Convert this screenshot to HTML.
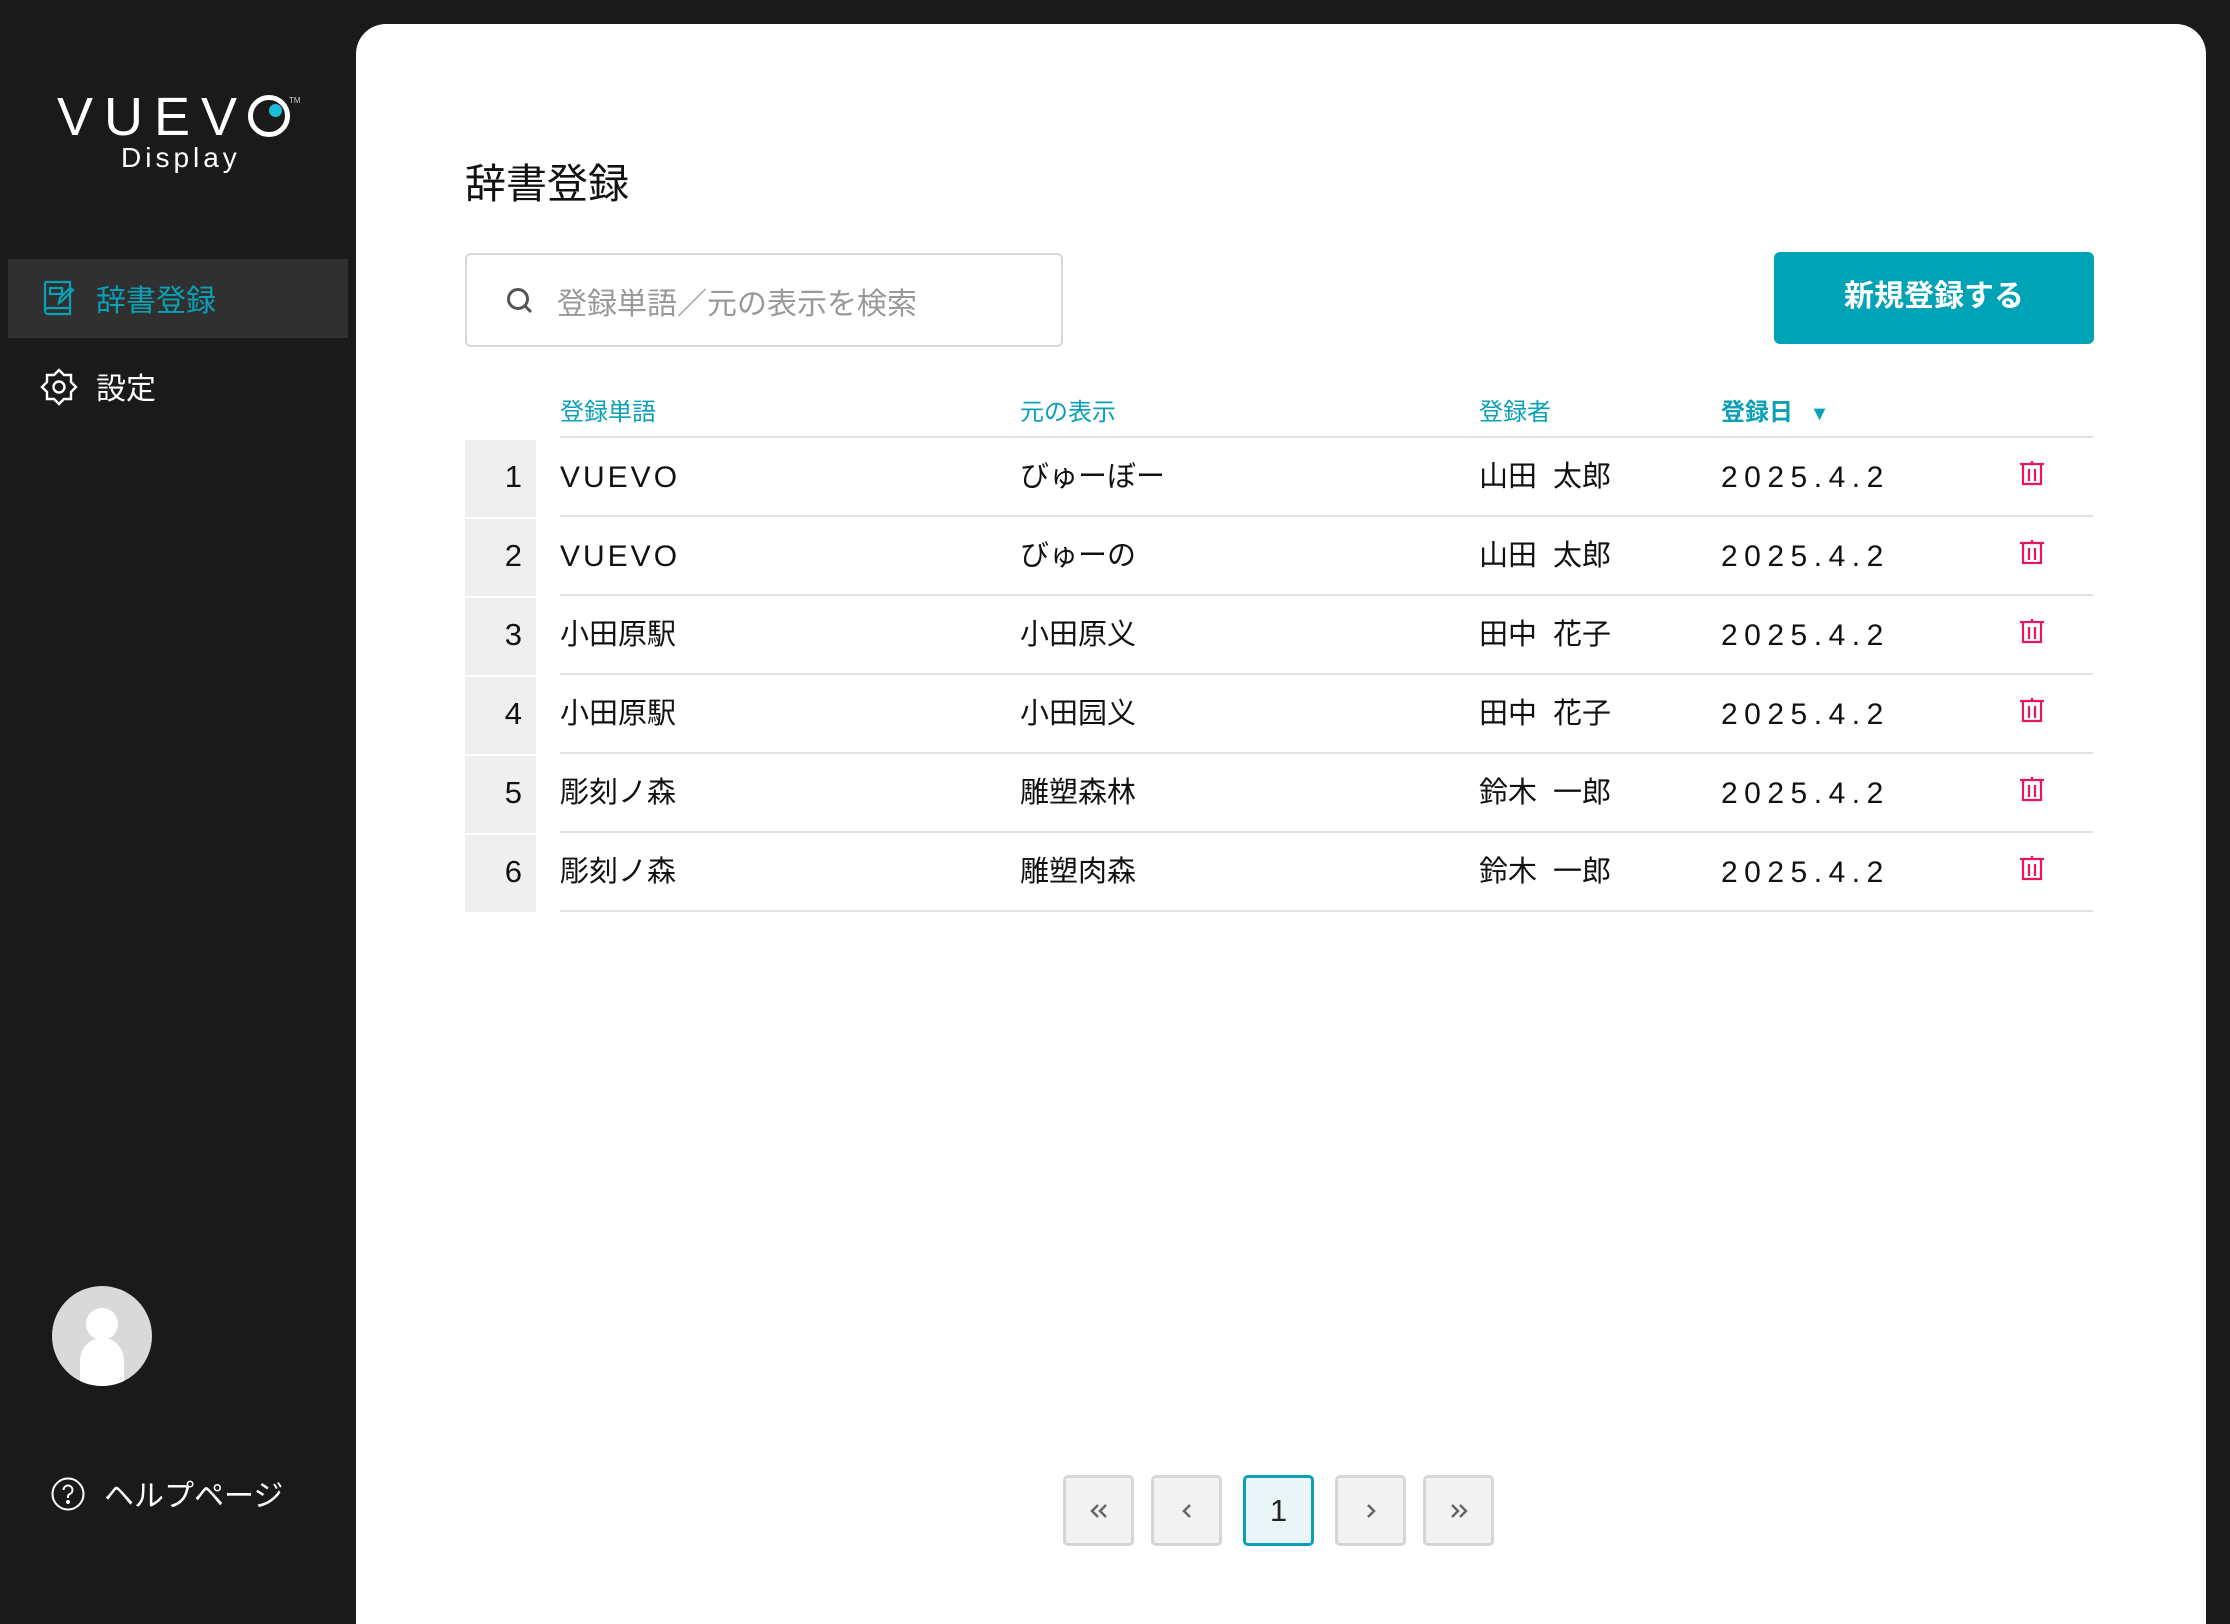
<!DOCTYPE html>
<html><head><meta charset="utf-8"><style>
*{margin:0;padding:0;box-sizing:border-box}
body{width:2230px;height:1594px;background:#1a1a1a;position:relative;overflow:hidden;font-family:"Liberation Sans","Noto Sans CJK JP",sans-serif;color:#111}
.a{position:absolute;white-space:nowrap}
#main{position:absolute;left:356px;top:24px;width:1850px;height:1600px;background:#fff;border-radius:30px 30px 0 0}
.hd{color:#0aa0b6;font-size:24px;top:392px}
.row{position:absolute;left:465px;width:1628px;height:79px}
.num{position:absolute;left:0;top:2px;width:71px;height:77px;background:#efefef;font-size:31px;text-align:right;padding-right:14px;line-height:74px}
.line{position:absolute;left:95px;right:0;bottom:0;height:2px;background:#e2e2e2}
.c{position:absolute;top:0;line-height:79px;font-size:29px}
.d{left:1256px;letter-spacing:6.5px;font-size:30px}
.n{word-spacing:8px}
.pg{position:absolute;top:1475px;width:71px;height:71px;border:3px solid #d6d6d6;border-radius:5px;background:#f2f2f2;display:flex;align-items:center;justify-content:center}
</style></head><body>
<!-- logo -->
<div class="a" style="left:57px;top:86px;font-size:54px;color:#fff;letter-spacing:11px;font-weight:300">VUEV<span style="display:inline-block;width:42px;height:42px;border:5px solid #fff;border-radius:50%;position:relative;vertical-align:-2px"><span style="position:absolute;right:3px;top:4px;width:13px;height:13px;border-radius:50%;background:#1bbfd6"></span></span></div>
<div class="a" style="left:289px;top:96px;font-size:8px;color:#ccc">TM</div>
<div class="a" style="left:121px;top:142px;font-size:28px;color:#fff;letter-spacing:4px">Display</div>
<!-- menu -->
<div class="a" style="left:8px;top:259px;width:340px;height:79px;background:#303030"></div>
<svg class="a" style="left:42px;top:280px" width="34" height="38" viewBox="0 0 34 38" fill="none" stroke="#0aa0b6" stroke-width="2.2"><path d="M4 2h24v32H6a3 3 0 0 1-3-3V3z"/><path d="M3 31a3 3 0 0 1 3-3h22"/><rect x="8" y="8" width="12" height="6"/><path d="M31 10l-10 10-4 3 1-5 10-10z"/></svg>
<div class="a" style="left:96px;top:276px;font-size:30px;color:#0aa0b6">辞書登録</div>
<svg class="a" style="left:40px;top:368px" width="38" height="38" viewBox="0 0 38 38" fill="none" stroke="#fff" stroke-width="2.4"><path d="M19 2l5 5 7 0 0 7 5 5-5 5 0 7-7 0-5 5-5-5-7 0 0-7-5-5 5-5 0-7 7 0z"/><circle cx="19" cy="19" r="5.5"/></svg>
<div class="a" style="left:96px;top:364px;font-size:30px;color:#fff">設定</div>
<!-- avatar -->
<div class="a" style="left:52px;top:1286px;width:100px;height:100px;border-radius:50%;background:#d9d9d9;overflow:hidden">
<div style="position:absolute;left:34px;top:22px;width:32px;height:32px;border-radius:50%;background:#fff"></div>
<div style="position:absolute;left:28px;top:52px;width:44px;height:60px;border-radius:22px 22px 0 0;background:#fff"></div></div>
<svg class="a" style="left:51px;top:1477px" width="34" height="34" viewBox="0 0 34 34" fill="none" stroke="#fff" stroke-width="2"><circle cx="17" cy="17" r="15.5"/><path d="M12.5 13a4.5 4.5 0 1 1 6 4.2c-1 .5-1.5 1.3-1.5 2.5v1.3"/><circle cx="17" cy="25" r="1" fill="#fff"/></svg>
<div class="a" style="left:104px;top:1471px;font-size:30px;color:#fff">ヘルプページ</div>

<div id="main"></div>
<div class="a" style="left:465px;top:150px;font-size:41px">辞書登録</div>
<div class="a" style="left:465px;top:253px;width:598px;height:94px;border:2px solid #d8d8d8;border-radius:6px"></div>
<svg class="a" style="left:505px;top:286px" width="30" height="30" viewBox="0 0 30 30" fill="none" stroke="#555" stroke-width="3"><circle cx="13" cy="13" r="9.5"/><path d="M20 20l6 6"/></svg>
<div class="a" style="left:557px;top:279px;font-size:30px;color:#999">登録単語／元の表示を検索</div>
<div class="a" style="left:1774px;top:252px;width:320px;height:92px;background:#00a2b5;border-radius:6px;color:#fff;font-weight:bold;font-size:30px;line-height:90px;text-align:center">新規登録する</div>

<div class="a hd" style="left:560px">登録単語</div>
<div class="a hd" style="left:1020px">元の表示</div>
<div class="a hd" style="left:1479px">登録者</div>
<div class="a hd" style="left:1721px;font-weight:bold">登録日 <span style="font-size:20px;margin-left:10px">▼</span></div>
<div class="a" style="left:560px;top:436px;width:1533px;height:2px;background:#e2e2e2"></div>

<div class="row" style="top:438px"><div class="num">1</div><div class="line"></div><div class="c" style="left:95px;letter-spacing:3px;font-size:30px">VUEVO</div><div class="c" style="left:555px">びゅーぼー</div><div class="c n" style="left:1014px">山田 太郎</div><div class="c d">2025.4.2</div><svg class="a" style="left:1554px;top:22px" width="26" height="26" viewBox="0 0 26 26" fill="none" stroke="#e8175d" stroke-width="2.2"><path d="M1 4h24M13 1v3M4 4v20h18V4M10 9v12M16 9v12"/></svg></div>
<div class="row" style="top:517px"><div class="num">2</div><div class="line"></div><div class="c" style="left:95px;letter-spacing:3px;font-size:30px">VUEVO</div><div class="c" style="left:555px">びゅーの</div><div class="c n" style="left:1014px">山田 太郎</div><div class="c d">2025.4.2</div><svg class="a" style="left:1554px;top:22px" width="26" height="26" viewBox="0 0 26 26" fill="none" stroke="#e8175d" stroke-width="2.2"><path d="M1 4h24M13 1v3M4 4v20h18V4M10 9v12M16 9v12"/></svg></div>
<div class="row" style="top:596px"><div class="num">3</div><div class="line"></div><div class="c" style="left:95px">小田原駅</div><div class="c" style="left:555px">小田原义</div><div class="c n" style="left:1014px">田中 花子</div><div class="c d">2025.4.2</div><svg class="a" style="left:1554px;top:22px" width="26" height="26" viewBox="0 0 26 26" fill="none" stroke="#e8175d" stroke-width="2.2"><path d="M1 4h24M13 1v3M4 4v20h18V4M10 9v12M16 9v12"/></svg></div>
<div class="row" style="top:675px"><div class="num">4</div><div class="line"></div><div class="c" style="left:95px">小田原駅</div><div class="c" style="left:555px">小田园义</div><div class="c n" style="left:1014px">田中 花子</div><div class="c d">2025.4.2</div><svg class="a" style="left:1554px;top:22px" width="26" height="26" viewBox="0 0 26 26" fill="none" stroke="#e8175d" stroke-width="2.2"><path d="M1 4h24M13 1v3M4 4v20h18V4M10 9v12M16 9v12"/></svg></div>
<div class="row" style="top:754px"><div class="num">5</div><div class="line"></div><div class="c" style="left:95px">彫刻ノ森</div><div class="c" style="left:555px">雕塑森林</div><div class="c n" style="left:1014px">鈴木 一郎</div><div class="c d">2025.4.2</div><svg class="a" style="left:1554px;top:22px" width="26" height="26" viewBox="0 0 26 26" fill="none" stroke="#e8175d" stroke-width="2.2"><path d="M1 4h24M13 1v3M4 4v20h18V4M10 9v12M16 9v12"/></svg></div>
<div class="row" style="top:833px"><div class="num">6</div><div class="line"></div><div class="c" style="left:95px">彫刻ノ森</div><div class="c" style="left:555px">雕塑肉森</div><div class="c n" style="left:1014px">鈴木 一郎</div><div class="c d">2025.4.2</div><svg class="a" style="left:1554px;top:22px" width="26" height="26" viewBox="0 0 26 26" fill="none" stroke="#e8175d" stroke-width="2.2"><path d="M1 4h24M13 1v3M4 4v20h18V4M10 9v12M16 9v12"/></svg></div>

<div class="pg" style="left:1063px"><svg width="20" height="16" viewBox="0 0 20 16" fill="none" stroke="#666" stroke-width="2.5"><path d="M9 2L3 8l6 6M17 2l-6 6 6 6"/></svg></div>
<div class="pg" style="left:1151px"><svg width="12" height="16" viewBox="0 0 12 16" fill="none" stroke="#666" stroke-width="2.5"><path d="M9 2L3 8l6 6"/></svg></div>
<div class="pg" style="left:1243px;border-color:#0aa0b6;background:#e9f5f7;font-size:31px;color:#222">1</div>
<div class="pg" style="left:1335px"><svg width="12" height="16" viewBox="0 0 12 16" fill="none" stroke="#666" stroke-width="2.5"><path d="M3 2l6 6-6 6"/></svg></div>
<div class="pg" style="left:1423px"><svg width="20" height="16" viewBox="0 0 20 16" fill="none" stroke="#666" stroke-width="2.5"><path d="M3 2l6 6-6 6M11 2l6 6-6 6"/></svg></div>
</body></html>
